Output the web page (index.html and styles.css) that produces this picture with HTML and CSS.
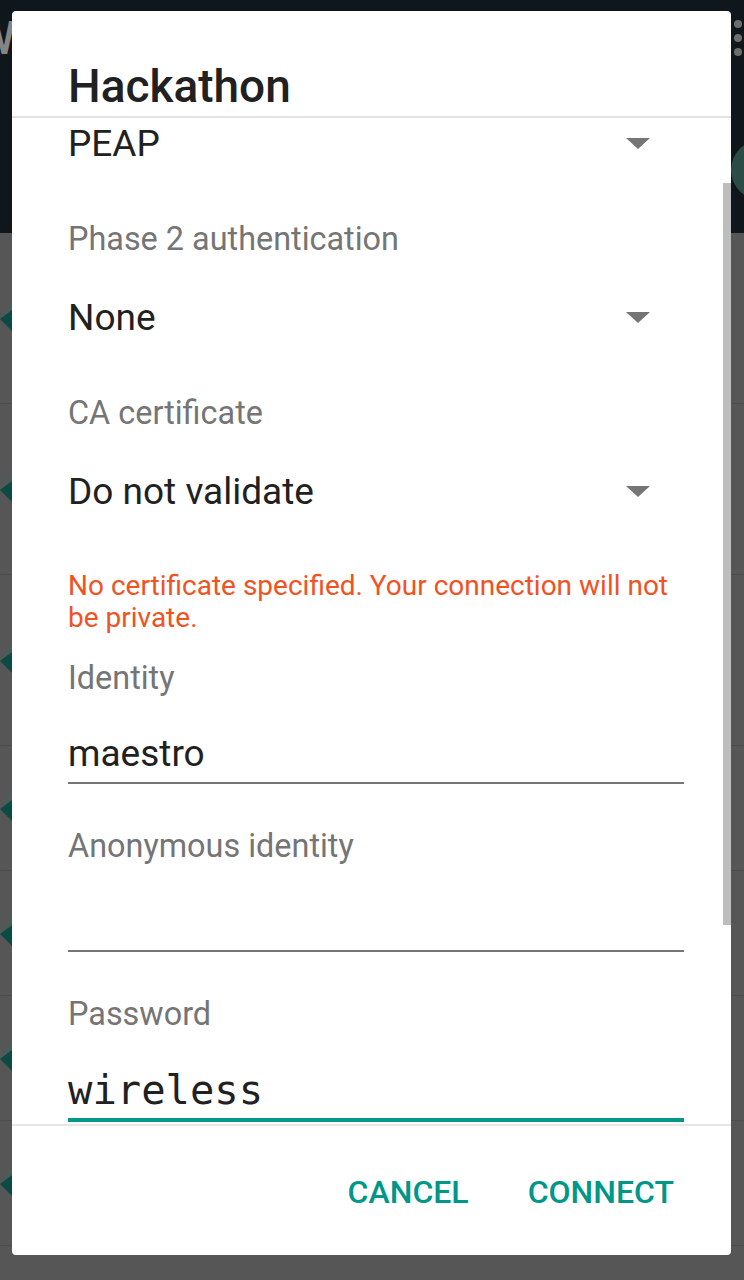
FILE: index.html
```html
<!DOCTYPE html>
<html lang="en">
<head>
<meta charset="utf-8">
<title>Hackathon</title>
<link rel="stylesheet" href="styles.css">
</head>
<body>
<div class="app">
  <header class="appbar">
    <span class="appbar-title">Wi-Fi</span>
    <div class="overflow"><i></i><i></i><i></i></div>
    <div class="toggle-thumb"></div>
  </header>
  <ul class="list">
    <li class="row tall"><svg class="wedge" viewBox="0 0 12 34" width="12" height="34"><polygon points="0,18 12,0 12,9" fill="#4a5d5a"/><polygon points="0,18 12,9 12,30" fill="#0b4b43"/></svg></li>
    <li class="row tall"><svg class="wedge" viewBox="0 0 12 34" width="12" height="34"><polygon points="0,18 12,0 12,9" fill="#4a5d5a"/><polygon points="0,18 12,9 12,30" fill="#0b4b43"/></svg></li>
    <li class="row tall"><svg class="wedge" viewBox="0 0 12 34" width="12" height="34"><polygon points="0,18 12,0 12,9" fill="#4a5d5a"/><polygon points="0,18 12,9 12,30" fill="#0b4b43"/></svg></li>
    <li class="row"><svg class="wedge" viewBox="0 0 12 34" width="12" height="34"><polygon points="0,18 12,0 12,9" fill="#4a5d5a"/><polygon points="0,18 12,9 12,30" fill="#0b4b43"/></svg></li>
    <li class="row"><svg class="wedge" viewBox="0 0 12 34" width="12" height="34"><polygon points="0,18 12,0 12,9" fill="#4a5d5a"/><polygon points="0,18 12,9 12,30" fill="#0b4b43"/></svg></li>
    <li class="row"><svg class="wedge" viewBox="0 0 12 34" width="12" height="34"><polygon points="0,18 12,0 12,9" fill="#4a5d5a"/><polygon points="0,18 12,9 12,30" fill="#0b4b43"/></svg></li>
    <li class="row"><svg class="wedge" viewBox="0 0 12 34" width="12" height="34"><polygon points="0,18 12,0 12,9" fill="#4a5d5a"/><polygon points="0,18 12,9 12,30" fill="#0b4b43"/></svg></li>
  </ul>
</div>

<div class="dialog" role="dialog">
  <div class="dlg-head">
    <h1 class="dlg-title">Hackathon</h1>
  </div>
  <div class="dlg-body">
    <div class="dlg-scroll">
      <div class="value-row first"><span>PEAP</span><span class="arrow"></span></div>

      <div class="label">Phase 2 authentication</div>
      <div class="value-row"><span>None</span><span class="arrow"></span></div>

      <div class="label">CA certificate</div>
      <div class="value-row"><span>Do not validate</span><span class="arrow"></span></div>

      <div class="error">No certificate specified. Your connection will not be private.</div>

      <div class="label edit-label after-error">Identity</div>
      <div class="input">maestro</div>

      <div class="label edit-label">Anonymous identity</div>
      <div class="input"></div>

      <div class="label edit-label">Password</div>
      <div class="input pass">wireless</div>
    </div>
    <div class="scrollbar"></div>
  </div>
  <div class="dlg-foot">
    <button class="btn">Cancel</button>
    <button class="btn">Connect</button>
  </div>
</div>
</body>
</html>
```

FILE: styles.css
```css
html, body {
  margin: 0;
  padding: 0;
}

body {
  width: 744px;
  height: 1280px;
  overflow: hidden;
  position: relative;
  background: #565656;
  font-family: Roboto, "Noto Sans", "Liberation Sans", sans-serif;
}

.app {
  width: 744px;
  height: 1280px;
  overflow: hidden;
}

.appbar {
  position: relative;
  height: 233px;
  box-sizing: border-box;
  background: #0f161c;
  display: flex;
  justify-content: space-between;
  align-items: flex-start;
  padding-top: 15px;
}

.appbar-title {
  margin-left: -25px;
  font-size: 46px;
  line-height: 46px;
  font-weight: 500;
  color: #858585;
}

.overflow {
  display: flex;
  flex-direction: column;
  gap: 6px;
  margin-top: 5px;
  margin-right: 2px;
}

.overflow i {
  display: block;
  width: 8px;
  height: 8px;
  border-radius: 50%;
  background: #6d6d6d;
}

.toggle-thumb {
  position: absolute;
  left: 731px;
  top: 140px;
  width: 60px;
  height: 60px;
  border-radius: 50%;
  background: #2a4b46;
}

.list {
  list-style: none;
  margin: 0;
  padding: 0;
}

.row {
  height: 124px;
  display: flex;
  align-items: center;
  border-bottom: 1px solid #4d4d4d;
}

.row.tall {
  height: 170px;
}

.wedge {
  display: block;
}

/* Dialog */
.dialog {
  position: absolute;
  top: 11px;
  left: 12px;
  width: 719px;
  height: 1244px;
  background: #ffffff;
  border-radius: 4px;
  display: flex;
  flex-direction: column;
  overflow: hidden;
}

.dlg-head {
  padding: 47px 56px 2px;
  border-bottom: 2px solid #e3e3e3;
}

.dlg-title {
  margin: 0;
  font-size: 46px;
  line-height: 56px;
  font-weight: 500;
  color: #212121;
}

.dlg-body {
  flex: 1;
  position: relative;
  overflow: hidden;
}

.dlg-scroll {
  padding: 0 47px 0 56px;
  margin-top: -5px;
}

.value-row {
  display: flex;
  align-items: center;
  justify-content: space-between;
  height: 60px;
  margin-top: 28px;
  font-size: 37px;
  color: #212121;
}

.value-row.first {
  margin-top: 0;
}

.arrow {
  width: 0;
  height: 0;
  border-left: 12px solid transparent;
  border-right: 12px solid transparent;
  border-top: 11px solid #757575;
  margin-right: 34px;
}

.label {
  margin-top: 46px;
  font-size: 32.4px;
  line-height: 40px;
  color: #757575;
}

.label.edit-label {
  margin-top: 42px;
}

.label.after-error {
  margin-top: 24px;
}

.error {
  margin-top: 49px;
  font-size: 28px;
  line-height: 32px;
  color: #f2521f;
}

.input {
  margin-top: 28px;
  height: 56px;
  line-height: 56px;
  font-size: 37px;
  color: #212121;
  border-bottom: 2px solid #757575;
}

.input.pass {
  font-family: "DejaVu Sans Mono", "Liberation Mono", monospace;
  font-size: 40.5px;
  border-bottom: 4px solid #009688;
}

.scrollbar {
  position: absolute;
  right: 0;
  top: 65px;
  width: 8px;
  height: 742px;
  background: #bdbdbd;
}

.dlg-foot {
  height: 131px;
  box-sizing: border-box;
  border-top: 2px solid #e6e6e6;
  display: flex;
  justify-content: flex-end;
  align-items: flex-start;
  gap: 59px;
  padding: 46px 57px 0 0;
}

.btn {
  font-family: Roboto, "Noto Sans", sans-serif;
  font-size: 32px;
  line-height: 40px;
  font-weight: 500;
  text-transform: uppercase;
  color: #009688;
  background: none;
  border: 0;
  padding: 0;
  margin: 0;
}
```
